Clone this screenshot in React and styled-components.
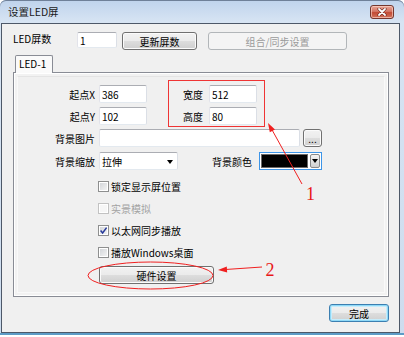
import styled, { createGlobalStyle, css } from "styled-components";

const Global = createGlobalStyle`
  html, body {
    margin: 0;
    background: #fff;
  }
  body {
    color: #000;
    font-size: 10px;
    font-family: "Noto Sans CJK SC", "Liberation Sans", sans-serif;
  }
`;

const Window = styled.div`
  width: 404px;
  height: 335px;
  display: flex;
  position: relative;
  flex-direction: column;
  box-sizing: border-box;
  padding: 0 4px 0 1px;
  border-radius: 6px 6px 0 0;
  border-bottom: 2px solid #5d9cc6;
  background: linear-gradient(#bfd3ec, #d7e4f3 22px, #cddcee);
  box-shadow: inset 0 1px 0 #6f8098;
`;

const TitleBar = styled.div`
  height: 23px;
  display: flex;
  padding-left: 7px;
  align-items: center;
  font-size: 10.5px;
  color: #1b1b1b;
`;

const CloseButton = styled.div`
  width: 24px;
  height: 14px;
  display: flex;
  margin: 5px 6px 0 auto;
  align-self: flex-start;
  align-items: center;
  justify-content: center;
  box-sizing: border-box;
  border-radius: 3px;
  border: 1px solid #74372e;
  background: linear-gradient(#e9a595, #d47766 45%, #c24b35 55%, #d2735c);
  box-shadow: inset 0 0 0 1px rgba(255, 220, 210, 0.6);
`;

const Client = styled.div`
  flex: 1;
  padding: 8px 0 0 11px;
  background: #f0f0f0;
  border: 1px solid #4d5868;
`;

const Row = styled.div`
  display: flex;
  height: 18px;
  align-items: ${({ top }) => (top ? "flex-start" : "center")};
`;

const TopLabel = styled.div`
  width: 64px;
  line-height: 12px;
  padding-top: 1px;
`;

const TextBox = styled.div`
  height: ${({ h }) => h || 18}px;
  width: ${({ w }) => w}px;
  display: flex;
  align-items: center;
  padding-left: 2px;
  box-sizing: border-box;
  background: #fff;
  border-radius: 2px;
  border: 1px solid;
  border-color: #abadb3 #dbdfe6 #e3e9ef #e2e3ea;
  font-size: 10px;
`;

const Button = styled.div`
  height: 18px;
  width: ${({ w }) => w}px;
  margin-left: ${({ ml }) => ml || 0}px;
  display: flex;
  align-items: center;
  justify-content: center;
  box-sizing: border-box;
  border-radius: 3px;
  border: 1px solid #707070;
  background: linear-gradient(#f2f2f2, #ebebeb 48%, #dddddd 52%, #cfcfcf);
  box-shadow: inset 0 0 0 1px #fbfbfb;

  ${({ disabled }) =>
    disabled &&
    css`
      color: #9a9a9a;
      border-color: #b2b6b9;
      background: #f4f4f4;
      box-shadow: none;
    `}

  ${({ primary }) =>
    primary &&
    css`
      border-color: #3c7fb1;
      box-shadow: inset 0 0 0 1px #8fd9f7, inset 0 0 0 2px #c6ecfb;
    `}
`;

const TabStrip = styled.div`
  display: flex;
  margin-top: 5px;
  padding-left: 2px;
`;

const Tab = styled.div`
  width: 38px;
  height: 18px;
  z-index: 1;
  position: relative;
  margin-bottom: -1px;
  padding-left: 3px;
  line-height: 16px;
  box-sizing: border-box;
  background: #fafafa;
  border: 1px solid #898c95;
  border-bottom: none;
  border-radius: 2px 2px 0 0;
`;

const Panel = styled.div`
  width: 376px;
  height: 225px;
  padding: 3px;
  box-sizing: border-box;
  background: #f2f2f2;
  border: 1px solid #898c95;
  box-shadow: inset 0 0 0 1px #fff;
`;

const Page = styled.div`
  height: 100%;
  box-sizing: border-box;
  background: #f0f0f0;
  border: 1px solid #f9f9f9;
  border-top-color: #e4e4e4;
`;

const TopSection = styled.div`
  display: flex;
  margin-top: 3px;
  align-items: flex-start;
`;

const FieldColumn = styled.div`
  row-gap: 4px;
  display: flex;
  padding-top: 5px;
  flex-direction: column;
`;

const Highlight = styled.div`
  height: 47px;
  row-gap: 4px;
  display: flex;
  margin-left: 21px;
  flex-direction: column;
  box-sizing: border-box;
  padding: 4px 7px 0 0;
  border: 1px solid #ef3434;
`;

const Label = styled.div`
  width: ${({ w }) => w || 77}px;
  margin-right: ${({ gap }) => gap || 4}px;
  margin-left: ${({ ml }) => ml || 0}px;
  text-align: right;
  white-space: nowrap;
`;

const FormRow = styled(Row)`
  margin-top: ${({ mt }) => mt}px;
`;

const Select = styled(TextBox)`
  position: relative;
  border-color: #abadb3 #dbdfe6 #e3e9ef #e2e3ea;

  &::after {
    content: "";
    position: absolute;
    right: 4px;
    top: 7px;
    border-left: 3.5px solid transparent;
    border-right: 3.5px solid transparent;
    border-top: 4px solid #000;
  }
`;

const ColorPicker = styled.div`
  width: 63px;
  height: 18px;
  display: flex;
  padding: 1px;
  column-gap: 2px;
  box-sizing: border-box;
  border: 1px solid #3d95e8;
  background: #fff;
`;

const Swatch = styled.div`
  width: 47px;
  background: #000;
  box-shadow: inset 0 0 0 1px #6a6a6a;
`;

const PickerArrow = styled.div`
  flex: 1;
  display: flex;
  align-items: center;
  justify-content: center;
  border-radius: 2px;
  border: 1px solid #8a8a8a;
  background: linear-gradient(#f4f4f4, #e2e2e2 50%, #cfcfcf);

  &::after {
    content: "";
    border-left: 3px solid transparent;
    border-right: 3px solid transparent;
    border-top: 4px solid #000;
  }
`;

const CheckList = styled.div`
  display: flex;
  margin-top: 5px;
  padding-left: 80px;
  flex-direction: column;
`;

const CheckRow = styled.div`
  height: 22px;
  display: flex;
  column-gap: 2px;
  align-items: center;
  color: ${({ disabled }) => (disabled ? "#a3a3a3" : "#000")};
`;

const Box = styled.div`
  width: 11px;
  height: 11px;
  display: flex;
  align-items: center;
  justify-content: center;
  box-sizing: border-box;
  border: 1px solid ${({ disabled }) => (disabled ? "#c2c2c2" : "#8e8f8f")};
  box-shadow: inset 0 0 0 1px #fff;
  background: ${({ disabled }) =>
    disabled ? "#f6f6f6" : "linear-gradient(135deg, #cfd2d6, #f6f6f6)"};
`;

const HardwareRow = styled.div`
  margin: 3px 0 0 81px;
`;

const Footer = styled.div`
  width: 376px;
  display: flex;
  margin-top: 7px;
  justify-content: flex-end;
`;

const Overlay = styled.svg`
  top: 0;
  left: 0;
  position: absolute;
  pointer-events: none;
`;

const Check = ({ label, checked, disabled }) => (
  <CheckRow disabled={disabled}>
    <Box disabled={disabled}>
      {checked && (
        <svg width="9" height="9" viewBox="0 0 9 9">
          <path
            d="M1.6 4.6 L3.6 7 L7.6 1.6"
            fill="none"
            stroke="#26399a"
            strokeWidth="1.5"
          />
        </svg>
      )}
    </Box>
    <span>{label}</span>
  </CheckRow>
);

const App = () => (
  <>
    <Global />
    <Window>
      <TitleBar>
        设置LED屏
        <CloseButton>
          <svg width="10" height="8" viewBox="0 0 10 8">
            <path
              d="M2 1 L8 7 M8 1 L2 7"
              stroke="#5a1a12"
              strokeWidth="3"
              strokeLinecap="round"
            />
            <path
              d="M2 1 L8 7 M8 1 L2 7"
              stroke="#fff"
              strokeWidth="1.8"
              strokeLinecap="round"
            />
          </svg>
        </CloseButton>
      </TitleBar>

      <Client>
        <Row top>
          <TopLabel>LED屏数</TopLabel>
          <TextBox w={40} h={16}>
            1
          </TextBox>
          <Button w={75} ml={5}>
            更新屏数
          </Button>
          <Button w={139} ml={11} disabled>
            组合/同步设置
          </Button>
        </Row>

        <TabStrip>
          <Tab>LED-1</Tab>
        </TabStrip>

        <Panel>
          <Page>
            <TopSection>
              <FieldColumn>
                <Row>
                  <Label>起点X</Label>
                  <TextBox w={48}>386</TextBox>
                </Row>
                <Row>
                  <Label>起点Y</Label>
                  <TextBox w={48}>102</TextBox>
                </Row>
              </FieldColumn>

              <Highlight>
                <Row>
                  <Label w={34} gap={6}>
                    宽度
                  </Label>
                  <TextBox w={48}>512</TextBox>
                </Row>
                <Row>
                  <Label w={34} gap={6}>
                    高度
                  </Label>
                  <TextBox w={48}>80</TextBox>
                </Row>
              </Highlight>
            </TopSection>

            <FormRow mt={2}>
              <Label>背景图片</Label>
              <TextBox w={201} />
              <Button w={19} ml={3}>
                ...
              </Button>
            </FormRow>

            <FormRow mt={5}>
              <Label>背景缩放</Label>
              <Select w={79}>拉伸</Select>
              <Label w={40} ml={34} gap={7}>
                背景颜色
              </Label>
              <ColorPicker>
                <Swatch />
                <PickerArrow />
              </ColorPicker>
            </FormRow>

            <CheckList>
              <Check label="锁定显示屏位置" />
              <Check label="实景模拟" disabled />
              <Check label="以太网同步播放" checked />
              <Check label="播放Windows桌面" />
            </CheckList>

            <HardwareRow>
              <Button w={115}>硬件设置</Button>
            </HardwareRow>
          </Page>
        </Panel>

        <Footer>
          <Button w={60} primary>
            完成
          </Button>
        </Footer>
      </Client>

      <Overlay width="404" height="337">
        <line x1="302" y1="184" x2="271" y2="128" stroke="#f02020" strokeWidth="1" />
        <polygon points="268,123 275,129.4 269.8,132.3" fill="#f02020" />
        <text
          x="310.5"
          y="200"
          fill="#e81818"
          fontSize="18"
          textAnchor="middle"
          fontFamily="'Liberation Serif', serif"
        >
          1
        </text>

        <ellipse
          cx="150.5"
          cy="275.5"
          rx="62.5"
          ry="13.5"
          fill="none"
          stroke="#f02020"
          strokeWidth="1"
        />
        <line x1="262" y1="267" x2="224" y2="269.6" stroke="#f02020" strokeWidth="1" />
        <polygon points="218,270 227.2,272.6 226.8,266.6" fill="#f02020" />
        <text
          x="270"
          y="276"
          fill="#e81818"
          fontSize="18"
          textAnchor="middle"
          fontFamily="'Liberation Serif', serif"
        >
          2
        </text>
      </Overlay>
    </Window>
  </>
);

export default App;
